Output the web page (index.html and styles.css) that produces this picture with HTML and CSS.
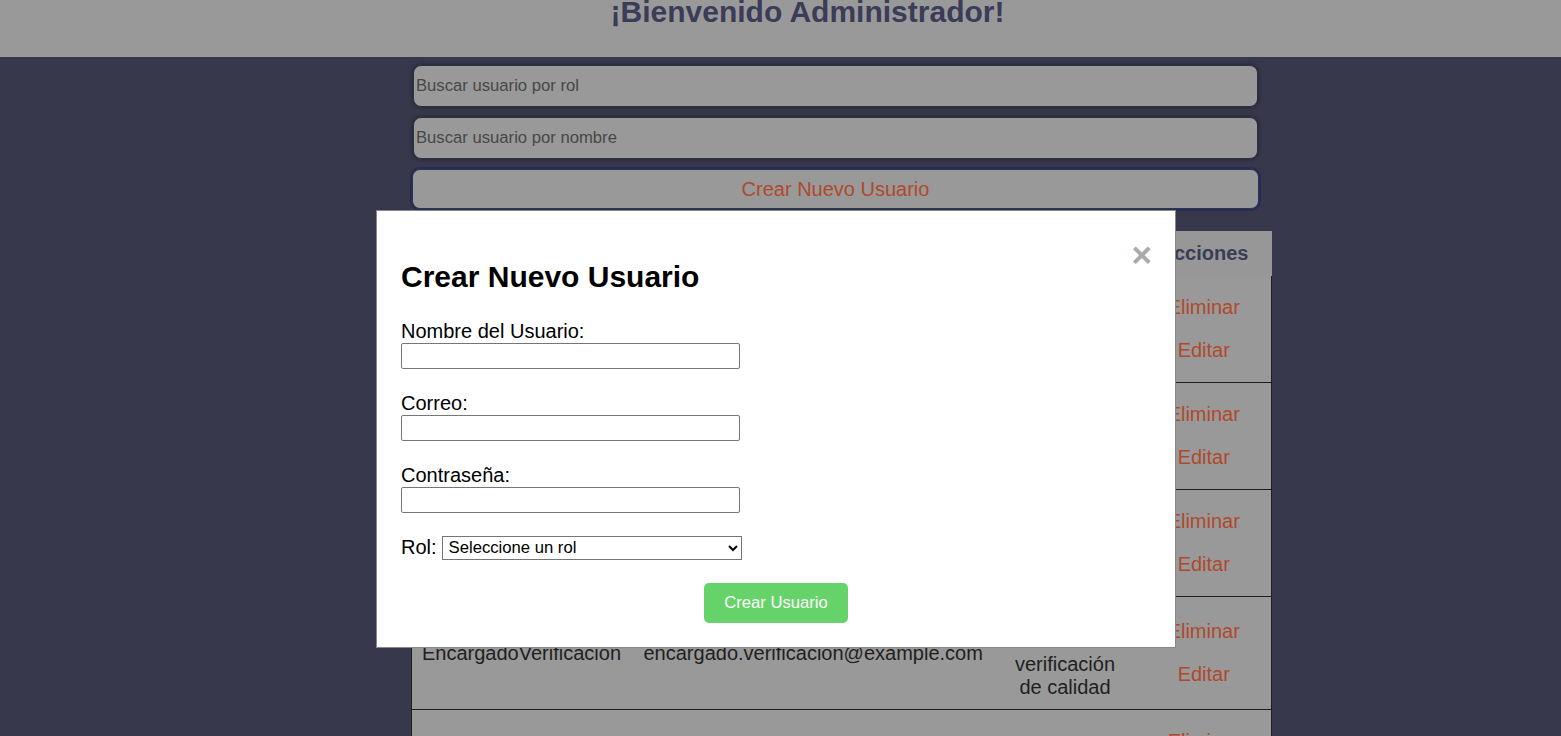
FILE: index.html
```html
<!DOCTYPE html>
<html lang="es">
<head>
<meta charset="utf-8">
<title>Administrador</title>
<link rel="stylesheet" href="styles.css">
</head>
<body>
<header class="topbar">
  <h1 class="title">¡Bienvenido Administrador!</h1>
</header>
<main class="panel">
  <input class="search" type="text" placeholder="Buscar usuario por rol">
  <input class="search" type="text" placeholder="Buscar usuario por nombre">
  <button class="create-btn" type="button">Crear Nuevo Usuario</button>
  <table class="users">
    <colgroup>
      <col class="c-name"><col class="c-mail"><col class="c-role"><col class="c-act">
    </colgroup>
    <thead>
      <tr><th>Nombre</th><th>Correo</th><th>Rol</th><th>Acciones</th></tr>
    </thead>
    <tbody>
      <tr>
        <td>Administrador</td><td>admin@example.com</td><td class="role">Administrador</td>
        <td class="act"><button class="link">Eliminar</button><button class="link">Editar</button></td>
      </tr>
      <tr>
        <td>Operario</td><td>operario@example.com</td><td class="role">Operario</td>
        <td class="act"><button class="link">Eliminar</button><button class="link">Editar</button></td>
      </tr>
      <tr>
        <td>Supervisor</td><td>supervisor@example.com</td><td class="role">Supervisor</td>
        <td class="act"><button class="link">Eliminar</button><button class="link">Editar</button></td>
      </tr>
      <tr>
        <td>EncargadoVerificacion</td><td>encargado.verificacion@example.com</td><td class="role">Encargado de verificación de calidad</td>
        <td class="act"><button class="link">Eliminar</button><button class="link">Editar</button></td>
      </tr>
      <tr>
        <td>Inspector</td><td>inspector@example.com</td><td class="role">Inspector</td>
        <td class="act"><button class="link">Eliminar</button><button class="link">Editar</button></td>
      </tr>
    </tbody>
  </table>
</main>
<div class="backdrop">
  <div class="modal">
    <span class="close">&times;</span>
    <h2 class="modal-title">Crear Nuevo Usuario</h2>
    <form class="form">
      <div class="field">
        <label class="label">Nombre del Usuario:</label>
        <input class="field-input" type="text">
      </div>
      <div class="field">
        <label class="label">Correo:</label>
        <input class="field-input" type="email">
      </div>
      <div class="field">
        <label class="label">Contraseña:</label>
        <input class="field-input" type="password">
      </div>
      <div class="role-row">
        <label class="label">Rol:</label>
        <select class="role-select"><option>Seleccione un rol</option></select>
      </div>
      <div class="submit-row">
        <button class="submit" type="button">Crear Usuario</button>
      </div>
    </form>
  </div>
</div>
</body>
</html>
```
FILE: styles.css
```css
html, body {
  margin: 0;
  padding: 0;
  overflow: hidden;
}
body {
  background: #37384c;
  font-family: "Liberation Sans", Arial, sans-serif;
  font-size: 20px;
  color: #1f1f1f;
}
.topbar {
  height: 57px;
  background: #999999;
  padding-left: 54px;
  box-sizing: border-box;
  overflow: hidden;
}
.title {
  margin: 0;
  font-size: 30px;
  line-height: 24px;
  font-weight: bold;
  text-align: center;
  color: #3a3c58;
}
.panel {
  margin-left: 413px;
  width: 845px;
  padding-top: 8px;
}
.search {
  display: block;
  box-sizing: border-box;
  width: 845px;
  height: 42px;
  margin: 0 0 10px 0;
  padding: 0 2px;
  background: #999999;
  border: 1px solid #2f3040;
  border-radius: 8px;
  box-shadow: 0 0 4px rgba(0, 0, 0, 0.45);
  font-family: "Liberation Sans", Arial, sans-serif;
  font-size: 16.67px;
  color: #1f1f1f;
}
.search::placeholder {
  color: #474747;
}
.create-btn {
  display: block;
  box-sizing: border-box;
  width: 847px;
  height: 40px;
  margin: 0 0 22px -1px;
  background: #999999;
  border: 1px solid #30354f;
  border-radius: 8px;
  box-shadow: 0 0 0 2px #262c56;
  font-family: "Liberation Sans", Arial, sans-serif;
  font-size: 20px;
  color: #b0492c;
}
.users {
  width: 860px;
  margin-left: -2px;
  border-collapse: collapse;
  table-layout: fixed;
}
.c-name { width: 222px; }
.c-mail { width: 360px; }
.c-role { width: 143px; }
.c-act { width: 135px; }
.users th {
  background: #979797;
  color: #3a3c58;
  font-weight: bold;
  font-size: 20px;
  line-height: 23px;
  padding: 11px 10px;
  text-align: center;
}
.users td {
  background: #999999;
  padding: 10px;
  line-height: 23px;
  vertical-align: middle;
  border-bottom: 1px solid #1f1f1f;
  text-align: left;
  white-space: nowrap;
}
.users td:first-child { border-left: 1px solid #1f1f1f; }
.users td:last-child { border-right: 1px solid #1f1f1f; }
.users td.role {
  text-align: center;
  white-space: normal;
}
.users td.act {
  text-align: center;
}
.link {
  display: block;
  margin: 0 auto;
  padding: 10px 0;
  background: none;
  border: none;
  font-family: "Liberation Sans", Arial, sans-serif;
  font-size: 20px;
  line-height: 23px;
  color: #b0492c;
}
.backdrop {
  position: fixed;
  inset: 0;
  padding-top: 210px;
}
.modal {
  box-sizing: border-box;
  width: 800px;
  margin-left: 376px;
  padding: 24px;
  background: #ffffff;
  border: 1px solid #888888;
  color: #000000;
}
.close {
  float: right;
  font-size: 35px;
  font-weight: bold;
  color: #aaaaaa;
  margin-right: -1px;
}
.modal-title {
  margin: 25px 0;
  font-size: 30px;
  font-weight: bold;
  line-height: 34.5px;
}
.form {
  margin: 0;
}
.field {
  margin-bottom: 23px;
}
.label {
  display: block;
  font-size: 20px;
  line-height: 23px;
}
.field-input {
  display: block;
  box-sizing: border-box;
  width: 339px;
  height: 26px;
  margin: 0;
  padding: 1px 2px;
  border: 1px solid #767676;
  border-radius: 2px;
  background: #fff;
  font-size: 16.67px;
}
.role-row {
  display: flex;
  align-items: center;
  gap: 5px;
  height: 24px;
}
.role-row .label {
  display: inline;
}
.role-select {
  box-sizing: border-box;
  width: 300px;
  height: 24px;
  margin: 0;
  padding: 0 2px;
  border: 1px solid #767676;
  border-radius: 0;
  background: #fff;
  font-family: "Liberation Sans", Arial, sans-serif;
  font-size: 16.67px;
  color: #000;
}
.submit-row {
  display: flex;
  justify-content: center;
  margin-top: 23px;
}
.submit {
  box-sizing: border-box;
  width: 144px;
  height: 40px;
  padding: 0;
  background: #66d36a;
  border: none;
  border-radius: 5px;
  font-family: "Liberation Sans", Arial, sans-serif;
  font-size: 16.67px;
  color: #ffffff;
}
```
